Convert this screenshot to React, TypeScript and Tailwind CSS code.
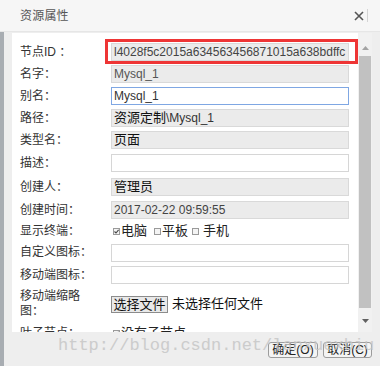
import { ReactNode } from "react";

const FONT = '"Liberation Sans", "Noto Sans CJK SC", Arial, sans-serif';

function Field({
  children,
  variant = "readonly",
}: {
  children?: ReactNode;
  variant?: "readonly" | "plain" | "focus";
}) {
  const look =
    variant === "readonly"
      ? "bg-[#ebebeb] border-[#d9d9d9]"
      : variant === "focus"
        ? "bg-white border-[#7fa7e3]"
        : "bg-white border-[#d6d6d6]";
  return (
    <div
      className={`h-[18px] w-[238px] border ${look} px-[2px] flex items-center overflow-hidden whitespace-nowrap text-[12px] leading-[16px] text-[#333]`}
    >
      {children}
    </div>
  );
}

function Check({ checked }: { checked?: boolean }) {
  return (
    <span className="w-[7px] h-[7px] border border-[#9a9a9a] bg-[#f4f4f4] flex items-center justify-center mr-[1px]">
      {checked && (
        <svg width="5" height="5" viewBox="0 0 5 5">
          <path d="M0.5 2.5 L2 4 L4.6 0.8" stroke="#444" strokeWidth="1.1" fill="none" />
        </svg>
      )}
    </span>
  );
}

function Row({
  label,
  h,
  children,
}: {
  label: ReactNode;
  h: string;
  children?: ReactNode;
}) {
  return (
    <div className={`flex items-center ${h}`}>
      <div className="w-[99px] pl-[8px] text-[12px] leading-[15px] text-[#333] shrink-0">
        {label}
      </div>
      {children}
    </div>
  );
}

export default function App() {
  return (
    <div
      className="w-[380px] h-[366px] bg-[#eeeeee] flex flex-col overflow-hidden relative"
      style={{ fontFamily: FONT }}
    >
      {/* title bar */}
      <div className="h-[32px] shrink-0 bg-[#f6f6f6] border-b border-[#e6e6e6] flex items-center pl-[20px]">
        <span className="text-[12px] text-[#555] tracking-[0.2px]">资源属性</span>
        <svg className="ml-auto" width="10" height="10" viewBox="0 0 10 10">
          <path d="M1 1 L9 9 M9 1 L1 9" stroke="#555" strokeWidth="1.6" />
        </svg>
        <div className="w-px h-[13px] bg-[#d4d4d4] ml-[3px] mr-[12px]" />
      </div>

      <div className="flex flex-1 min-h-0">
        <div className="w-[4px] bg-[#a8adb2] shrink-0" />
        <div className="flex-1 flex flex-col pl-[8px]">
          <div className="flex h-[300px] pt-[1px] shrink-0">
            {/* form panel */}
            <div className="w-[346px] h-[299px] bg-white overflow-hidden pt-[8px] relative">
              <Row label="节点ID ：" h="h-[22px]">
                <Field>
                  <span className="text-[#444]">l4028f5c2015a634563456871015a638bdffc</span>
                </Field>
              </Row>
              <Row label="名字：" h="h-[22px]">
                <Field>
                  <span className="text-[#555]">Mysql_1</span>
                </Field>
              </Row>
              <Row label="别名：" h="h-[22px]">
                <Field variant="focus">
                  <span className="text-[#333]">Mysql_1</span>
                </Field>
              </Row>
              <Row label="路径：" h="h-[22px]">
                <Field>
                  <span className="text-[13px] text-[#111]">资源定制</span>
                  <span className="text-[#333]">\Mysql_1</span>
                </Field>
              </Row>
              <Row label="类型名：" h="h-[22px]">
                <Field>
                  <span className="text-[13px] text-[#111]">页面</span>
                </Field>
              </Row>
              <Row label="描述：" h="h-[24px]">
                <Field variant="plain" />
              </Row>
              <Row label="创建人：" h="h-[24px]">
                <Field>
                  <span className="text-[13px] text-[#111]">管理员</span>
                </Field>
              </Row>
              <Row label="创建时间：" h="h-[22px]">
                <Field>
                  <span className="text-[#444]">2017-02-22 09:59:55</span>
                </Field>
              </Row>
              <Row label="显示终端：" h="h-[20px]">
                <div className="flex items-center text-[13px] text-[#222] pl-[2px]">
                  <Check checked />
                  <span className="mr-[7px]">电脑</span>
                  <Check />
                  <span className="mr-[4px]">平板</span>
                  <Check />
                  <span className="ml-[3px]">手机</span>
                </div>
              </Row>
              <Row label="自定义图标：" h="h-[23px]">
                <Field variant="plain" />
              </Row>
              <Row label="移动端图标：" h="h-[22px]">
                <Field variant="plain" />
              </Row>
              <Row
                label={
                  <>
                    移动端缩略
                    <br />
                    图：
                  </>
                }
                h="h-[36px]"
              >
                <div className="flex items-center text-[13px] text-[#111]">
                  <span className="h-[17px] w-[57px] border border-[#8c8c8c] bg-[#e9e9e9] flex items-center justify-center leading-[15px]">
                    选择文件
                  </span>
                  <span className="ml-[4px]">未选择任何文件</span>
                </div>
              </Row>
              <Row label="叶子节点：" h="h-[22px]">
                <div className="flex items-center text-[13px] text-[#222] pl-[2px]">
                  <Check checked />
                  <span>没有子节点</span>
                </div>
              </Row>

              {/* red highlight */}
              <div className="absolute left-[93px] top-[6px] w-[253px] h-[25px] border-[3px] border-[#ee3535]" />
            </div>

            {/* scrollbar */}
            <div className="w-[14px] h-[299px] bg-[#f1f1f1] flex flex-col items-center">
              <svg className="mt-[13px]" width="7" height="4" viewBox="0 0 7 4">
                <path d="M0 4 L3.5 0 L7 4 Z" fill="#a3a3a3" />
              </svg>
              <div className="mt-[6px] w-[12px] h-[252px] bg-[#c1c1c1]" />
              <svg className="mt-[11px]" width="7" height="4" viewBox="0 0 7 4">
                <path d="M0 0 L3.5 4 L7 0 Z" fill="#606060" />
              </svg>
            </div>
          </div>

          {/* button bar */}
          <div className="flex-1 flex justify-end items-start pt-[10px] pr-[8px] gap-[5px]">
            <button className="h-[16px] w-[50px] border border-[#9c9c9c] rounded-[3px] bg-[#f4f4f4] text-[12px] leading-[14px] text-[#222]">
              确定(O)
            </button>
            <button className="h-[16px] w-[49px] border border-[#9c9c9c] rounded-[3px] bg-[#f4f4f4] text-[12px] leading-[14px] text-[#222]">
              取消(C)
            </button>
          </div>
        </div>
      </div>

      {/* watermark */}
      <div
        className="absolute left-[58px] top-[337px] text-[17px] leading-[17px] text-[#c4c4c4] opacity-80 whitespace-nowrap pointer-events-none z-10"
        style={{ fontFamily: '"Liberation Mono", monospace' }}
      >
        http://blog.csdn.net/lanxuexbiu
      </div>
    </div>
  );
}
